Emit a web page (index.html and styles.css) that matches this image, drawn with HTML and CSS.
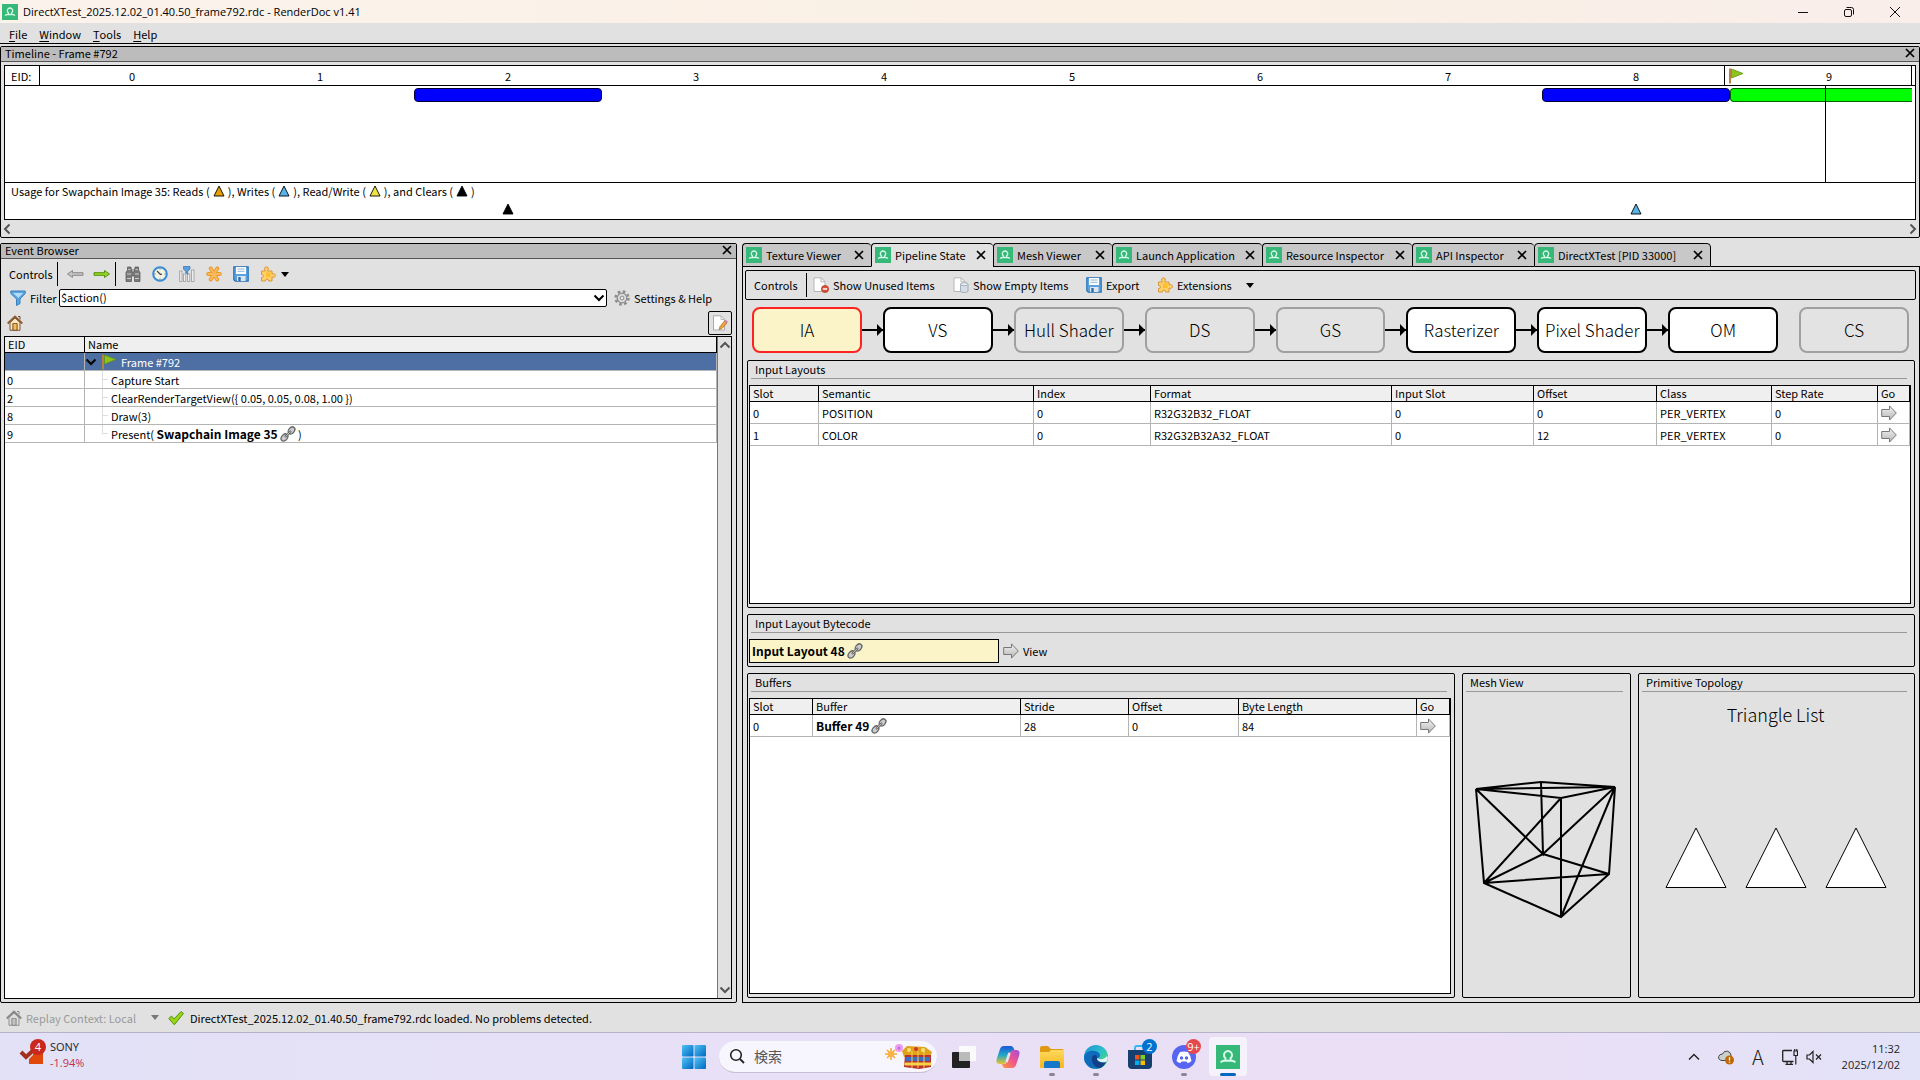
FILE: index.html
```html
<!DOCTYPE html>
<html lang="en">
<head>
<meta charset="utf-8">
<title>DirectXTest_2025.12.02_01.40.50_frame792.rdc - RenderDoc v1.41</title>
<link rel="stylesheet" href="styles.css">
</head>
<body>
<svg class="defs" aria-hidden="true">
  <defs>
    <linearGradient id="g-gray" x1="0" y1="0" x2="0" y2="1"><stop offset="0" stop-color="#f4f4f4"/><stop offset="1" stop-color="#b5b5b5"/></linearGradient>
    <linearGradient id="g-win" x1="0" y1="0" x2="1" y2="1"><stop offset="0" stop-color="#4fc3f7"/><stop offset="1" stop-color="#0067c0"/></linearGradient>
    <linearGradient id="g-edge" x1="0" y1="0" x2="1" y2="1"><stop offset="0" stop-color="#1c8fd8"/><stop offset=".5" stop-color="#2fc1c8"/><stop offset="1" stop-color="#5fd94a"/></linearGradient>
    <linearGradient id="g-cop1" x1="0" y1="0" x2="0" y2="1"><stop offset="0" stop-color="#1a58d8"/><stop offset=".5" stop-color="#22a6c9"/><stop offset="1" stop-color="#e9c62b"/></linearGradient>
    <linearGradient id="g-cop2" x1="1" y1="0" x2="0" y2="1"><stop offset="0" stop-color="#a24be0"/><stop offset=".5" stop-color="#f0568a"/><stop offset="1" stop-color="#ff9a3d"/></linearGradient>
    <linearGradient id="g-fold" x1="0" y1="0" x2="0" y2="1"><stop offset="0" stop-color="#ffd95e"/><stop offset="1" stop-color="#f8b61c"/></linearGradient>
  </defs>
  <symbol id="rd" viewBox="0 0 16 16"><rect width="16" height="16" fill="#35b878"/><path d="M3 11.500C4.500 10.300 5.500 10.300 6.300 10.300V8.800A2.700 2.700 0 1 1 9.700 8.800V10.300C10.500 10.300 11.500 10.300 13 11.500M5.500 10.500H10.500" fill="none" stroke="#d8fbea" stroke-width="1.300"/></symbol>
  <symbol id="x" viewBox="0 0 10 10"><path d="M1 1L9 9M9 1L1 9" stroke="#000" stroke-width="1.700"/></symbol>
  <symbol id="flag" viewBox="0 0 16 16"><path d="M2 0.500V15.500" stroke="#b9803f" stroke-width="2"/><path d="M3.500 1L15 5.500L3.500 10Z" fill="#8fc31c" stroke="#5e9417" stroke-width=".8"/></symbol>
  <symbol id="tri" viewBox="0 0 12 12"><path d="M6 1L11 11H1Z" fill="currentColor" stroke="#000" stroke-width=".9"/></symbol>
  <symbol id="down" viewBox="0 0 8 5"><path d="M0 0H8L4 5Z" fill="currentColor"/></symbol>
  <symbol id="chev" viewBox="0 0 12 8"><path d="M1.500 1.500L6 6L10.500 1.500" fill="none" stroke="currentColor" stroke-width="2"/></symbol>
  <symbol id="thin-arrow" viewBox="0 0 18 12"><path d="M1 4.700H11.500V2.500L16.500 6L11.500 9.500V7.300H1Z" fill="var(--f)" stroke="var(--s)"/></symbol>
  <symbol id="go" viewBox="0 0 16 16"><path d="M.700 4.500H8.500V.900L15.300 8L8.500 15.100V11.500H.700Z" fill="url(#g-gray)" stroke="#777"/></symbol>
  <symbol id="bino" viewBox="0 0 16 16"><path d="M2.500 1H6V3H7V6H9V3H10V1H13.500V4L15 6.500V15.500H9.500V10H6.500V15.500H1V6.500L2.500 4Z" fill="#7a7a7a" stroke="#555" stroke-width=".7"/><path d="M2 8H6M10 8H14M2 12.500H6M10 12.500H14M3.300 3.500H5.500M10.500 3.500H12.700" stroke="#ccc"/></symbol>
  <symbol id="clock" viewBox="0 0 16 16"><circle cx="8" cy="8" r="6.800" fill="#f3f3e4" stroke="#3a8ad4" stroke-width="2"/><path d="M8 2.500V3.500M8 12.500V13.500M2.500 8H3.500M12.500 8H13.500" stroke="#456"/><path d="M5 5L8.500 8.500L10 8" fill="none" stroke="#444" stroke-width="1.200"/></symbol>
  <symbol id="bars" viewBox="0 0 16 16"><g fill="#eee" stroke="#999" stroke-width=".8"><rect x=".7" y="5" width="2.300" height="10.500"/><rect x="4.500" y="8" width="2.300" height="7.500"/><rect x="8.500" y="8" width="2.300" height="7.500"/><rect x="12.500" y="4" width="2.500" height="11.500"/></g><path d="M4.500 .5H11V3L8.700 5.500V8L6.800 7V5.500L4.500 3Z" fill="#5b9fda" stroke="#2f6fb0" stroke-width=".7"/></symbol>
  <symbol id="star" viewBox="0 0 16 16"><path d="M8 8L4.800 2.500M8 8L11.200 2.500M8 8L4.800 13.500M8 8L11.200 13.500M8 8H2.200M8 8H13.800" stroke="#ea9a2e" stroke-width="4" stroke-linecap="round"/><path d="M8 8L5 2.800M8 8L11 2.800M8 8L5 13.200M8 8L11 13.200M8 8H2.500M8 8H13.500" stroke="#fcb95b" stroke-width="2.200" stroke-linecap="round"/></symbol>
  <symbol id="disk" viewBox="0 0 16 16"><path d="M.8.800H15.200V15.200H2.300L.8 13.700Z" fill="#5aa3e0" stroke="#2a72b8" stroke-width="1.200"/><rect x="3" y="1" width="10" height="7" fill="#fff"/><path d="M4.500 3H11.500M4.500 5.300H11.500" stroke="#8eb4d6"/><rect x="4" y="10" width="8.500" height="5" fill="#d9e5ef"/><rect x="5.300" y="11" width="2.400" height="4" fill="#2f6ca8"/></symbol>
  <symbol id="puzzle" viewBox="0 0 16 16"><path d="M1.500 5H5.300C3.800 2.500 5 .8 6.500 .8S9.200 2.500 7.700 5H12V8C14 6.900 15.300 8 15.300 9.500S14 12.100 12 11V15H8.500C9 12.500 5 12.500 5.500 15H1.500V11.500C4 12 4 8 1.500 8.500Z" fill="#ffd06a" stroke="#d9963a"/><path d="M6 6.500H10.500V11H6Z" fill="#ffbe2a"/></symbol>
  <symbol id="funnel" viewBox="0 0 16 16"><path d="M.8 1H15.200V3.500L10 9V13.500L6.500 15.500V9L.8 3.500Z" fill="#57a5e2" stroke="#3a80bd"/><path d="M3 3H13L8.500 8Z" fill="#b6dcf7"/></symbol>
  <symbol id="gear" viewBox="0 0 16 16"><circle cx="8" cy="8" r="6.500" fill="none" stroke="#8c8c8c" stroke-width="2.400" stroke-dasharray="2.600 2.500"/><circle cx="8" cy="8" r="4.800" fill="#ddd" stroke="#8c8c8c" stroke-width="1.300"/><circle cx="8" cy="8" r="1.900" fill="#eee" stroke="#888"/></symbol>
  <symbol id="home" viewBox="0 0 16 16"><path d="M3 7.500V15.300H13V7.500L8 3Z" fill="var(--w)" stroke="var(--l)" stroke-width=".9"/><path d="M11 1.500H13V4.500" fill="none" stroke="var(--l)"/><path d="M.7 8.500L8 1.500L15.300 8.500" fill="none" stroke="var(--r)" stroke-width="1.800"/><path d="M5.800 15V8.500H10.200V15Z" fill="var(--d)" stroke="var(--l)" stroke-width=".8"/><path d="M8 9V15" stroke="var(--w)" stroke-width=".7"/></symbol>
  <symbol id="edit" viewBox="0 0 16 16"><path d="M1.500.8H9L12.500 4.300V15H1.500Z" fill="#fff" stroke="#aaa"/><path d="M9 1V4.500H12.500" fill="none" stroke="#bbb"/><path d="M7 14.500L8 11.500L12.500 6L15 8L10 13.500Z" fill="#f0a237" stroke="#a66c2a" stroke-width=".7"/><path d="M12.500 6L13.500 4.800L16 6.800L15 8Z" fill="#d87bb5"/></symbol>
  <symbol id="link" viewBox="0 0 16 16"><g fill="#ccc" stroke="#666" stroke-width="1.300"><ellipse cx="11.500" cy="4.500" rx="4" ry="2.800" transform="rotate(-50 11.500 4.500)"/><ellipse cx="4.500" cy="11.500" rx="4" ry="2.800" transform="rotate(-50 4.500 11.500)"/></g><path d="M5 11L11 5" stroke="#666" stroke-width="2"/><path d="M5.500 10.500L10.500 5.500" stroke="#ddd" stroke-width=".7"/></symbol>
  <symbol id="unused" viewBox="0 0 16 16"><path d="M1 .8H8L12 4.500V14.500H1Z" fill="#fff" stroke="#b5b5b5"/><path d="M8 1V4.800H12" fill="none" stroke="#b5b5b5"/><circle cx="12" cy="12" r="3.600" fill="#dc5137" stroke="#a83322" stroke-width=".7"/><path d="M9.800 12H14.200" stroke="#fff" stroke-width="1.500"/></symbol>
  <symbol id="empty" viewBox="0 0 16 16"><path d="M1 .8H8L12 4.500V14.500H1Z" fill="#fff" stroke="#b5b5b5"/><path d="M8 1V4.800H12" fill="none" stroke="#b5b5b5"/><path d="M7.500 7V14C7.500 16 15 16 15 14V7Z" fill="#d5dde5" stroke="#8f9dab" stroke-width=".8"/><ellipse cx="11.250" cy="7.200" rx="3.700" ry="1.500" fill="#eef2f6" stroke="#8f9dab" stroke-width=".8"/></symbol>
  <symbol id="check" viewBox="0 0 16 16"><path d="M.8 8.500L3.500 6L6 9L13 1.500L15.500 3.500L6.300 14.800Z" fill="#9ad412" stroke="#4f9414"/></symbol>
</svg>

<header class="titlebar">
  <svg class="i16"><use href="#rd"/></svg>
  <h1>DirectXTest_2025.12.02_01.40.50_frame792.rdc - RenderDoc v1.41</h1>
  <div class="winbtns">
    <button aria-label="Minimize"><svg viewBox="0 0 12 12"><path d="M1 6.500H11" stroke="#111"/></svg></button>
    <button aria-label="Restore"><svg viewBox="0 0 12 12"><rect x="1.500" y="3.500" width="7" height="7" rx="1.500" fill="none" stroke="#111"/><path d="M3.500 1.500H8.500Q10.500 1.500 10.500 3.500V8.500" fill="none" stroke="#111"/></svg></button>
    <button aria-label="Close"><svg viewBox="0 0 12 12"><path d="M1 1L11 11M11 1L1 11" stroke="#111"/></svg></button>
  </div>
</header>

<nav class="menubar">
  <button><u>F</u>ile</button><button><u>W</u>indow</button><button><u>T</u>ools</button><button><u>H</u>elp</button>
</nav>

<section class="dock timeline">
  <div class="dock-title"><h2>Timeline - Frame #792</h2><button aria-label="Close Timeline"><svg class="i10"><use href="#x"/></svg></button></div>
  <div class="tl-frame">
    <div class="tl-head">
      <span class="tl-label">EID:</span>
      <div class="tl-grid tl-nums">
        <span>0</span><span>1</span><span>2</span><span>3</span><span>4</span><span>5</span><span>6</span><span>7</span><span>8</span>
        <span class="tl-current"><svg class="i16"><use href="#flag"/></svg><b>9</b></span>
      </div>
    </div>
    <div class="tl-grid tl-track">
      <i class="bar b2"></i><i class="bar b8"></i><i class="bar b9"></i><i class="cursor"></i>
    </div>
    <div class="tl-usage">
      <p>Usage for Swapchain Image 35: Reads (<svg class="read"><use href="#tri"/></svg>), Writes (<svg class="write"><use href="#tri"/></svg>), Read/Write (<svg class="rw"><use href="#tri"/></svg>), and Clears (<svg><use href="#tri"/></svg>)</p>
      <div class="tl-grid tl-marks"><svg class="m2"><use href="#tri"/></svg><svg class="m8 write"><use href="#tri"/></svg></div>
    </div>
  </div>
  <div class="tl-scroll"><button aria-label="Scroll left"><svg class="chev left"><use href="#chev"/></svg></button><button aria-label="Scroll right"><svg class="chev rightward"><use href="#chev"/></svg></button></div>
</section>

<main class="split">
  <section class="dock events">
    <div class="dock-title"><h2>Event Browser</h2><button aria-label="Close Event Browser"><svg class="i10"><use href="#x"/></svg></button></div>
    <div class="ev-tools">
      <span class="lbl">Controls</span><i class="sep"></i>
      <button aria-label="Back"><svg class="arr dim"><use href="#thin-arrow"/></svg></button>
      <button aria-label="Forward"><svg class="arr on"><use href="#thin-arrow"/></svg></button>
      <i class="sep"></i>
      <button aria-label="Find"><svg class="i16"><use href="#bino"/></svg></button>
      <button aria-label="Time durations"><svg class="i16"><use href="#clock"/></svg></button>
      <button aria-label="Columns"><svg class="i16"><use href="#bars"/></svg></button>
      <button aria-label="Bookmark"><svg class="i16"><use href="#star"/></svg></button>
      <button aria-label="Export"><svg class="i16"><use href="#disk"/></svg></button>
      <button aria-label="Extensions"><svg class="i16"><use href="#puzzle"/></svg></button>
      <svg class="down"><use href="#down"/></svg>
    </div>
    <div class="ev-filter">
      <svg class="i16"><use href="#funnel"/></svg>
      <label for="filter">Filter</label>
      <div class="combo"><input id="filter" type="text" value="$action()"><button aria-label="Filter history"><svg class="chev"><use href="#chev"/></svg></button></div>
      <button class="settings"><svg class="i16"><use href="#gear"/></svg>Settings &amp; Help</button>
    </div>
    <div class="ev-marks">
      <button aria-label="Home"><svg class="i16 home"><use href="#home"/></svg></button>
      <button class="editbtn" aria-label="Edit"><svg class="i16"><use href="#edit"/></svg></button>
    </div>
    <div class="tree">
      <table>
        <colgroup><col class="w-eid"><col></colgroup>
        <thead><tr><th>EID</th><th>Name</th></tr></thead>
        <tbody>
          <tr class="sel"><td></td><td><div class="node"><svg class="chev"><use href="#chev"/></svg><svg class="i16"><use href="#flag"/></svg>Frame #792</div></td></tr>
          <tr><td>0</td><td><div class="leaf"><i></i>Capture Start</div></td></tr>
          <tr><td>2</td><td><div class="leaf"><i></i>ClearRenderTargetView({ 0.05, 0.05, 0.08, 1.00 })</div></td></tr>
          <tr><td>8</td><td><div class="leaf"><i></i>Draw(3)</div></td></tr>
          <tr><td>9</td><td><div class="leaf last"><i></i>Present( <a href="#res35">Swapchain Image 35</a><svg class="i16"><use href="#link"/></svg> )</div></td></tr>
        </tbody>
      </table>
      <div class="vscroll"><svg class="chev up"><use href="#chev"/></svg><svg class="chev"><use href="#chev"/></svg></div>
    </div>
  </section>

  <section class="right">
    <div class="tabs">
      <div class="tab t1"><svg class="i16"><use href="#rd"/></svg><span>Texture Viewer</span><button aria-label="Close tab"><svg class="i10"><use href="#x"/></svg></button></div>
      <div class="tab t2 active"><svg class="i16"><use href="#rd"/></svg><span>Pipeline State</span><button aria-label="Close tab"><svg class="i10"><use href="#x"/></svg></button></div>
      <div class="tab t3"><svg class="i16"><use href="#rd"/></svg><span>Mesh Viewer</span><button aria-label="Close tab"><svg class="i10"><use href="#x"/></svg></button></div>
      <div class="tab t4"><svg class="i16"><use href="#rd"/></svg><span>Launch Application</span><button aria-label="Close tab"><svg class="i10"><use href="#x"/></svg></button></div>
      <div class="tab t4"><svg class="i16"><use href="#rd"/></svg><span>Resource Inspector</span><button aria-label="Close tab"><svg class="i10"><use href="#x"/></svg></button></div>
      <div class="tab t2"><svg class="i16"><use href="#rd"/></svg><span>API Inspector</span><button aria-label="Close tab"><svg class="i10"><use href="#x"/></svg></button></div>
      <div class="tab t5"><svg class="i16"><use href="#rd"/></svg><span>DirectXTest [PID 33000]</span><button aria-label="Close tab"><svg class="i10"><use href="#x"/></svg></button></div>
      <div class="tabfill"></div>
    </div>
    <div class="pane">
      <div class="ps-tools">
        <span class="lbl">Controls</span><i class="sep"></i>
        <button class="p1"><svg class="i16"><use href="#unused"/></svg>Show Unused Items</button>
        <button class="p2"><svg class="i16"><use href="#empty"/></svg>Show Empty Items</button>
        <button class="p3"><svg class="i16"><use href="#disk"/></svg>Export</button>
        <button class="p4"><svg class="i16"><use href="#puzzle"/></svg>Extensions</button>
        <svg class="down"><use href="#down"/></svg>
      </div>
      <div class="stages">
        <button class="stage cur">IA</button><i class="link"></i>
        <button class="stage">VS</button><i class="link"></i>
        <button class="stage off">Hull Shader</button><i class="link"></i>
        <button class="stage off">DS</button><i class="link"></i>
        <button class="stage off">GS</button><i class="link"></i>
        <button class="stage">Rasterizer</button><i class="link"></i>
        <button class="stage">Pixel Shader</button><i class="link"></i>
        <button class="stage">OM</button><i class="gap"></i>
        <button class="stage off">CS</button>
      </div>
      <section class="group layouts">
        <h3>Input Layouts</h3>
        <div class="grid-box">
          <table>
            <colgroup><col class="c-slot"><col class="c-sem"><col class="c-idx"><col class="c-fmt"><col class="c-in"><col class="c-off"><col class="c-cls"><col class="c-step"><col class="c-go"></colgroup>
            <thead><tr><th>Slot</th><th>Semantic</th><th>Index</th><th>Format</th><th>Input Slot</th><th>Offset</th><th>Class</th><th>Step Rate</th><th>Go</th></tr></thead>
            <tbody>
              <tr><td>0</td><td>POSITION</td><td>0</td><td>R32G32B32_FLOAT</td><td>0</td><td>0</td><td>PER_VERTEX</td><td>0</td><td><svg class="i16"><use href="#go"/></svg></td></tr>
              <tr><td>1</td><td>COLOR</td><td>0</td><td>R32G32B32A32_FLOAT</td><td>0</td><td>12</td><td>PER_VERTEX</td><td>0</td><td><svg class="i16"><use href="#go"/></svg></td></tr>
            </tbody>
          </table>
        </div>
      </section>
      <section class="group bytecode">
        <h3>Input Layout Bytecode</h3>
        <div class="bc-row">
          <a class="bc-field" href="#res48">Input Layout 48<svg class="i16"><use href="#link"/></svg></a>
          <button><svg class="i16"><use href="#go"/></svg>View</button>
        </div>
      </section>
      <div class="lower">
        <section class="group buffers">
          <h3>Buffers</h3>
          <div class="grid-box">
            <table>
              <colgroup><col class="d-slot"><col class="d-buf"><col class="d-str"><col class="d-off"><col class="d-len"><col class="d-go"></colgroup>
              <thead><tr><th>Slot</th><th>Buffer</th><th>Stride</th><th>Offset</th><th>Byte Length</th><th>Go</th></tr></thead>
              <tbody><tr><td>0</td><td><div class="res"><a href="#res49">Buffer 49</a><svg class="i16"><use href="#link"/></svg></div></td><td>28</td><td>0</td><td>84</td><td><svg class="i16"><use href="#go"/></svg></td></tr></tbody>
            </table>
          </div>
        </section>
        <section class="group mesh">
          <h3>Mesh View</h3>
          <svg class="cube" viewBox="0 0 143 139"><path d="M2 9L67 2L141 7L87 18ZM2 9L141 7M2 9L10 103L87 137L135 94L141 7M87 18V137M67 2L69 74L2 9M69 74L141 7M69 74L10 103L87 18M10 103L135 94L69 74M87 137L141 7" fill="none" stroke="#000" stroke-width="2"/></svg>
        </section>
        <section class="group topo">
          <h3>Primitive Topology</h3>
          <p>Triangle List</p>
          <svg viewBox="0 0 222 62"><g fill="#fff" stroke="#000"><path d="M31 1L61 60.500H1Z"/><path d="M111 1L141 60.500H81Z"/><path d="M191 1L221 60.500H161Z"/></g></svg>
        </section>
      </div>
    </div>
  </section>
</main>

<footer class="status">
  <svg class="i16 home gray"><use href="#home"/></svg><span class="ctx">Replay Context: Local</span><svg class="down"><use href="#down"/></svg>
  <svg class="i16 ok"><use href="#check"/></svg><span>DirectXTest_2025.12.02_01.40.50_frame792.rdc loaded. No problems detected.</span>
</footer>

<footer class="taskbar">
  <button class="widget">
    <svg viewBox="0 0 28 26"><path d="M3 14L8 19L20 8" fill="none" stroke="#a3301c" stroke-width="4"/><path d="M11 26V21L15 17V14H25V26Z" fill="#e0480c"/><circle cx="20" cy="9" r="8" fill="#c9281c"/><text x="20" y="13" text-anchor="middle" fill="#fff" font-size="11">4</text></svg>
    <span>SONY<em>-1.94%</em></span>
  </button>
  <div class="apps">
    <button aria-label="Start"><svg viewBox="0 0 24 24"><g fill="url(#g-win)"><rect width="11.500" height="11.500" rx="1"/><rect x="12.500" width="11.500" height="11.500" rx="1"/><rect y="12.500" width="11.500" height="11.500" rx="1"/><rect x="12.500" y="12.500" width="11.500" height="11.500" rx="1"/></g></svg></button>
    <div class="search">
      <svg class="mag" viewBox="0 0 16 16"><circle cx="7" cy="7" r="5.300" fill="none" stroke="#222" stroke-width="1.600"/><path d="M11 11L15 15" stroke="#222" stroke-width="1.800"/></svg>
      <input type="text" aria-label="検索" placeholder="検索">
      <svg class="deco" viewBox="0 0 48 26"><g stroke="#f5a93a" stroke-width="1.500"><path d="M6 5V17M0 11H12M2 7L10 15M10 7L2 15"/></g><circle cx="6" cy="11" r="3" fill="#fbb040"/><circle cx="14" cy="5" r="4" fill="#ee9af0"/><circle cx="14" cy="5" r="1.500" fill="#b76ee0"/><path d="M17 8L22 3L40 4L47 9L45 14H19Z" fill="#e0a21a"/><path d="M20 12H46V24L34 26L19 24Z" fill="#b9322c"/><path d="M21 14H45V18H21Z" fill="#3a6fc4"/><path d="M20 20H46V22H20ZM27 8V25M33 8V25M39 8V25" fill="#f6d34a" stroke="#f6d34a"/><circle cx="24" cy="7" r="2" fill="#f6e27a"/><circle cx="31" cy="6" r="2" fill="#d4342a"/><circle cx="38" cy="7" r="2" fill="#f6e27a"/></svg>
    </div>
    <button aria-label="Task view"><svg viewBox="0 0 24 24"><rect x="7" y="1" width="17" height="15" rx="1" fill="#fafafa"/><rect y="7" width="18" height="16" rx="1" fill="#222"/><rect x="7" y="7" width="11" height="9" fill="#bbb"/></svg></button>
    <button aria-label="Copilot"><svg viewBox="0 0 24 24"><path d="M8 1H15Q17 1 18 4L19 7H15Q13 7 12 10L10 17Q9 19 7 19H4Q-1 19 1 13L4 4Q5 1 8 1Z" fill="url(#g-cop1)"/><path d="M16 23H9Q7 23 6 19H9Q11 18 12 14L14 8Q15 5 17 5H20Q25 5 23 11L20 20Q19 23 16 23Z" fill="url(#g-cop2)"/><path d="M13.500 8L10.500 17" stroke="#e8e2f6" stroke-width="2.500"/></svg></button>
    <button class="run" aria-label="Explorer"><svg viewBox="0 0 24 24"><path d="M0 3Q0 1 2 1H8L11 4H22Q24 4 24 6V21H0Z" fill="#e09a12"/><path d="M0 7H9L11 5H24V22Q24 23 23 23H1Q0 23 0 22Z" fill="url(#g-fold)"/><path d="M4 23V18Q4 16 6 16H18Q20 16 20 18V23Z" fill="#1677c8"/></svg></button>
    <button class="run" aria-label="Edge"><svg viewBox="0 0 24 24"><circle cx="12" cy="12" r="12" fill="url(#g-edge)"/><path d="M0 13C0 7 6 5 11 6C17 7 17 12 14 13C13 15 16 18 22 17C18 25 8 26 3 20Q0 17 0 13Z" fill="#0f6cbd"/><path d="M8 12C7 18 11 23 16 23C19 22 21 19 22 17C16 19 12 16 13 13Q13 10 11 10Q9 10 8 12Z" fill="#123f86"/><path d="M13 13C13 16 17 18 22 17C24 15 24 12 23 11C20 15 16 15 13 13Z" fill="#e5f4fb"/></svg></button>
    <button aria-label="Store"><svg viewBox="0 0 24 24"><path d="M7 6V3Q7 1 9 1H15Q17 1 17 3V6" fill="none" stroke="#35b8f0" stroke-width="2"/><path d="M0 5H24V20Q24 24 20 24H4Q0 24 0 20Z" fill="#173f70"/><path d="M7 10H11.500V14.500H7Z" fill="#f1511b"/><path d="M12.500 10H17V14.500H12.500Z" fill="#80cc28"/><path d="M7 15.500H11.500V20H7Z" fill="#00adef"/><path d="M12.500 15.500H17V20H12.500Z" fill="#fbbc09"/></svg><b class="badge blue">2</b></button>
    <button class="run" aria-label="Discord"><svg viewBox="0 0 24 24"><circle cx="12" cy="12" r="12" fill="#5865f2"/><path d="M8 7Q12 6 16 7Q19 11 19.500 16Q17.500 18 15.500 18L14.500 16.500H9.500L8.500 18Q6.500 18 4.500 16Q5 11 8 7Z" fill="#fff"/><circle cx="9.500" cy="13" r="1.700" fill="#5865f2"/><circle cx="14.500" cy="13" r="1.700" fill="#5865f2"/></svg><b class="badge red">9+</b></button>
    <button class="now" aria-label="RenderDoc"><svg><use href="#rd"/></svg></button>
  </div>
  <div class="tray">
    <svg class="t-up" viewBox="0 0 12 8"><path d="M1 6.500L6 1.500L11 6.500" fill="none" stroke="#222" stroke-width="1.400"/></svg>
    <svg class="i16" viewBox="0 0 16 16"><path d="M4 11.500Q0 11 .7 7.500Q1.500 5 4.500 5Q6 1.500 9.500 2.200Q12.500 3 13 6V11.500Z" fill="#ccd0cc" stroke="#444"/><circle cx="11.500" cy="11" r="4.500" fill="#bf6a0a"/><path d="M11.500 8.300V11.500M11.500 12.700V13.700" stroke="#fff" stroke-width="1.300"/></svg>
    <span class="ime">A</span>
    <svg class="i16" viewBox="0 0 16 16"><path d="M10 1.500H1.500Q.7 1.500.7 2.500V11.500Q.7 12.500 1.700 12.500H11.500M5 12.500V15M9 12.500V15M3.500 15.300H11" fill="none" stroke="#222" stroke-width="1.300"/><path d="M12 2V6.500H15.500V2ZM13.800 6.500V15.500M12.700 0V2M14.800 0V2" fill="none" stroke="#222" stroke-width="1.200"/></svg>
    <svg class="i16 spk" viewBox="0 0 16 16"><path d="M1 6H3.500L7 2.500V13.500L3.500 10H1Z" fill="none" stroke="#222" stroke-width="1.200"/><path d="M10 5.500L15 10.500M15 5.500L10 10.500" stroke="#222" stroke-width="1.200"/></svg>
    <time>11:32<br>2025/12/02</time>
  </div>
</footer>
</body>
</html>
```
FILE: styles.css
```css
* { box-sizing: border-box; }
body {
  margin: 0; height: 100vh; display: flex; flex-direction: column; overflow: hidden;
  background: #e1e1e1; color: #000;
  font: 11px/14px "Noto Sans CJK JP", "Liberation Sans", sans-serif;
}
.defs { position: absolute; width: 0; height: 0; }
h1, h2, h3, p { margin: 0; font-size: 11px; font-weight: 400; }
button { border: 0; background: none; padding: 0; margin: 0; font: inherit; color: inherit; display: flex; align-items: center; justify-content: center; }
a { color: inherit; text-decoration: none; font-weight: 700; font-size: 12px; }
svg { display: block; flex: none; }
.i16 { width: 16px; height: 16px; }
.i10 { width: 10px; height: 10px; }
.chev { width: 12px; height: 8px; }
.down { width: 8px; height: 5px; }
.left { transform: rotate(90deg); color: #555; }
.rightward { transform: rotate(-90deg); color: #555; }
.up { transform: rotate(180deg); }
.sep { width: 1px; height: 24px; background: #000; }

.titlebar { flex: none; height: 23px; display: flex; align-items: center; gap: 5px; padding-left: 2px; background: linear-gradient(90deg, #fbf2ec, #faf0e4 60%, #f9eeea); }
.titlebar h1 { flex: 1; font-family: "Open Sans", sans-serif; }
.winbtns { display: flex; padding-right: 2px; }
.winbtns button { width: 46px; height: 20px; }
.winbtns svg { width: 12px; height: 12px; }

.menubar { flex: none; height: 21px; display: flex; gap: 12px; padding: 2px 0 0 9px; border-bottom: 1px solid #000; }
.menubar u { text-underline-offset: 2px; }

.dock { border: 1px solid #000; }
.dock-title { height: 15px; display: flex; justify-content: space-between; align-items: center; padding: 0 4px 2px; background: #bcbcbc; border-bottom: 1px solid #555; }

.timeline { flex: none; margin-top: 2px; border-radius: 2px; }
.tl-frame { margin: 3px 3px 0; border: 1px solid #000; background: #fff; }
.tl-head { display: flex; height: 20px; border-bottom: 1px solid #000; position: relative; }
.tl-label { width: 35px; border-right: 1px solid #000; padding-left: 6px; line-height: 20px; position: absolute; height: 19px; }
.tl-grid { flex: 1; display: grid; grid-template-columns: repeat(9, 188fr) 182fr; margin: 0 3px 0 33px; }
.tl-nums { line-height: 20px; text-align: center; }
.tl-current { display: flex; align-items: center; margin-left: -6px; border: solid #000; border-width: 0 1px; padding-left: 3px; }
.tl-current b { flex: 1; font-weight: 400; padding-left: 3px; }
.tl-track { height: 96px; padding-top: 2px; }
.bar { height: 14px; border: 1px solid #003; border-radius: 4px; background: #00f; grid-row: 1; }
.b2 { grid-column: 3; }
.b8 { grid-column: 9; }
.b9 { grid-column: 10; background: #0f0; border-color: #060; border-right: 0; border-radius: 4px 0 0 4px; }
.cursor { grid-column: 10; grid-row: 1; width: 1px; height: 96px; margin-top: -2px; margin-left: 52%; background: #000; z-index: 1; }
.tl-usage { border-top: 1px solid #000; height: 37px; }
.tl-usage p { padding: 0 6px; display: flex; align-items: center; white-space: pre; height: 16px; }
.tl-usage svg { width: 12px; height: 12px; }
.tl-usage p svg { margin: 0 3px; }
.read { color: #e69f00; }
.write { color: #56b4e9; }
.rw { color: #f0e442; }
.tl-marks { justify-items: center; padding-top: 4px; }
.m2 { grid-column: 3; }
.m8 { grid-column: 9; }
.tl-scroll { display: flex; justify-content: space-between; height: 17px; }

.split { flex: 1; min-height: 0; display: grid; grid-template-columns: 737fr 1178fr; gap: 5px; margin-top: 5px; }
.events { display: flex; flex-direction: column; border-radius: 2px; padding: 0 0 3px; }
.ev-tools { display: flex; align-items: center; height: 30px; padding-left: 8px; }
.ev-tools button { width: 27px; height: 24px; }
.ev-tools .lbl { width: 48px; }
.ev-tools .sep + button { margin-left: 3px; }
.arr { width: 18px; height: 12px; }
.dim { --f: #c4c4c4; --s: #8a8a8a; transform: scaleX(-1); }
.on { --f: #9bd41c; --s: #4f9414; }
.ev-filter { display: flex; align-items: center; height: 18px; padding: 0 20px 0 9px; }
.ev-filter label { width: 33px; padding-left: 4px; }
.combo { flex: 1; height: 18px; display: flex; border: 1px solid #000; border-radius: 2px; background: #fff; }
.combo input { flex: 1; border: 0; padding: 0 1px; font: inherit; height: 14px; background: none; outline: 0; }
.combo button { width: 15px; }
.settings { margin-left: 7px; gap: 4px; width: 102px; justify-content: flex-start; white-space: nowrap; }
.ev-marks { display: flex; justify-content: space-between; align-items: center; height: 29px; padding: 3px 4px 0 6px; }
.editbtn { width: 24px; height: 24px; border: 1px solid #000; border-radius: 2px; }
.home { --w: #fbe6c0; --l: #6d4a2a; --r: #8b5a30; --d: #f0a32c; }
.gray { --w: #ddd; --l: #888; --r: #888; --d: #b5b5b5; }
.tree { flex: 1; min-height: 0; margin: 0 4px 0 3px; border: 1px solid #000; background: #fff; display: flex; align-items: stretch; }
.tree table { flex: 1; align-self: flex-start; }
.vscroll { width: 14px; background: #e1e1e1; display: flex; flex-direction: column; justify-content: space-between; align-items: center; padding: 4px 0; border-left: 1px solid #777; color: #555; }

table { width: 100%; table-layout: fixed; border-collapse: separate; border-spacing: 0; }
th { text-align: left; font-weight: 400; height: 16px; padding: 0 3px 1px; background: #efefef; border-bottom: 1px solid #000; border-right: 1px solid #000; }
td { padding: 0 2px; border-bottom: 1px solid #b4b4b4; border-right: 1px solid #b4b4b4; white-space: nowrap; }
.w-eid { width: 80px; }
.tree td { height: 18px; }
.tree td:last-child { padding: 0; }
.sel td { background: #4e6fa3; color: #fff; }
.node { display: flex; align-items: center; height: 17px; }
.node .chev { color: #000; }
.node .i16 { margin: 0 4px 0 4px; }
.leaf { display: flex; align-items: center; height: 17px; white-space: pre; }
.leaf i { align-self: stretch; margin: 0 3px 0 17px; width: 6px; border-left: 1px solid #ddd; background: linear-gradient(#ddd, #ddd) 0 8px / 6px 1px no-repeat; }
.leaf.last i { align-self: flex-start; height: 9px; }
.leaf svg { margin-left: 2px; }
.res { display: flex; align-items: center; gap: 2px; }

.right { display: flex; flex-direction: column; min-width: 0; }
.tabs { display: flex; height: 24px; }
.tab { flex: none; display: flex; align-items: center; gap: 4px; padding: 0 7px 0 3px; background: #c8c8c8; border: 1px solid #000; border-right-width: 0; border-radius: 4px 4px 0 0; white-space: nowrap; }
.tab span { flex: 1; }
.tab.active { background: #e1e1e1; border-bottom-color: #e1e1e1; }
.t1 { width: 129px; } .t2 { width: 122px; } .t3 { width: 119px; } .t4 { width: 150px; } .t5 { width: 177px; border-right-width: 1px; }
.tabfill { flex: 1; border-bottom: 1px solid #000; }
.pane { flex: 1; min-height: 0; display: flex; flex-direction: column; border: solid #000; border-width: 0 1px 1px; padding: 3px 3px 4px; }
.ps-tools { flex: none; height: 30px; display: flex; align-items: center; border: 1px solid #000; border-radius: 2px; padding-left: 8px; margin: 0 0 0 -1px; }
.ps-tools .lbl { width: 52px; }
.ps-tools .sep { margin-right: 6px; }
.ps-tools button { gap: 4px; justify-content: flex-start; white-space: nowrap; }
.p1 { width: 140px; } .p2 { width: 133px; } .p3 { width: 71px; } .p4 { width: 89px; }
.stages { flex: none; display: flex; align-items: center; padding: 7px 7px 7px 6px; }
.stage { flex: 1 1 0; min-width: 0; height: 46px; border: 2px solid #000; border-radius: 8px; background: #fff; font-size: 17px; line-height: 20px; white-space: nowrap; font-weight: 300; }
.stage.off { background: #e3e3e3; border-color: #a0a0a0; }
.stage.cur { background: #faf4c8; border-color: #f22; }
.link { width: 21px; height: 12px; background: linear-gradient(#000, #000) 0 5px / 100% 2px no-repeat; display: flex; justify-content: flex-end; }
.link::after { content: ""; border: solid transparent; border-width: 6px 0 6px 6px; border-left-color: #000; }
.gap { width: 21px; }
.group { border: 1px solid #000; border-radius: 2px; padding: 0 3px 3px 1px; display: flex; flex-direction: column; margin: 0 1px; }
.group h3 { height: 18px; line-height: 17px; margin: 0 4px 6px 2px; padding-left: 4px; border-bottom: 1px solid #999; }
.grid-box { flex: 1; min-height: 0; border: 1px solid #000; background: #fff; }
.grid-box td { height: 22px; padding: 0 3px; }
td .i16 { display: inline-block; vertical-align: middle; }
.layouts { flex: 243 1 0; }
.c-slot { width: 69px; } .c-sem { width: 215px; } .c-idx { width: 117px; } .c-fmt { width: 241px; } .c-in { width: 142px; } .c-off { width: 123px; } .c-cls { width: 115px; } .c-step { width: 106px; } .c-go { width: 32px; }
.d-slot { width: 63px; } .d-buf { width: 208px; } .d-str { width: 108px; } .d-off { width: 110px; } .d-len { width: 178px; } .d-go { width: 33px; }
.bytecode { flex: none; margin-top: 6px; margin-bottom: 6px; }
.bc-row { display: flex; gap: 4px; }
.bc-field { width: 250px; height: 24px; display: flex; align-items: center; gap: 2px; padding-left: 2px; border: 1px solid #000; background: #faf4c8; }
.bc-row button { gap: 4px; }
.lower { flex: 325 1 0; min-height: 0; display: grid; grid-template-columns: 710fr 171fr 279fr; gap: 5px; }
.cube { width: 143px; height: 139px; margin: 82px auto 0; }
.topo p { text-align: center; font-size: 18px; line-height: 24px; font-weight: 300; margin-top: 4px; }
.topo svg { width: 222px; height: 62px; margin: 101px auto 0; }

.status { flex: none; height: 29px; display: flex; align-items: center; padding-left: 6px; }
.status .ctx { width: 129px; padding-left: 4px; color: #999; }
.status .down { color: #777; }
.status .ok { margin: 0 6px 0 9px; }

.taskbar { flex: none; height: 48px; border-top: 1px solid #b5b1c8; display: grid; grid-template-columns: 1fr auto 1fr; align-items: center; background: linear-gradient(90deg, #e2e1f6, #e8e0f6 45%, #ebdff5 75%, #e2e2f8); font-family: "Open Sans", "Noto Sans CJK JP", sans-serif; font-size: 11px; line-height: 16px; color: #222; }
.widget { justify-self: start; padding-left: 18px; gap: 4px; text-align: left; align-self: start; padding-top: 6px; align-items: flex-start; }
.widget svg { width: 28px; height: 26px; margin-top: -1px; }
.widget em { display: block; font-style: normal; color: #c4314b; }
.apps { display: flex; align-items: center; margin-left: 2px; }
.apps > button { width: 44px; height: 47px; position: relative; }
.apps > button svg { width: 24px; height: 24px; }
.search { width: 218px; height: 32px; margin: 0 5px 0 3px; border-radius: 16px; background: #f7f5fd; border-bottom: 1px solid #c4bfd4; display: flex; align-items: center; padding: 0 4px 0 10px; }
.mag { width: 16px; height: 16px; }
.search input { flex: 1; min-width: 0; border: 0; background: none; font: 14px/20px "Noto Sans CJK JP", sans-serif; padding: 0 0 0 9px; }
.search input::placeholder { color: #555; opacity: 1; }
.deco { width: 48px; height: 26px; }
.run::after, .now::after { content: ""; position: absolute; bottom: 4px; left: 19px; width: 6px; height: 3px; border-radius: 2px; background: #8a8794; }
.now::before { content: ""; position: absolute; inset: 4px 3px; border-radius: 4px; background: #f6f2fc; }
.now svg { position: relative; }
.now::after { left: 14px; width: 16px; background: #0067c0; }
.badge { position: absolute; top: 6px; left: 24px; min-width: 15px; height: 15px; border-radius: 8px; color: #fff; font-weight: 400; line-height: 15px; text-align: center; }
.blue { background: #0072d0; }
.red { background: #e5484d; }
.tray { justify-self: end; display: flex; align-items: center; padding-right: 20px; }
.t-up { width: 12px; height: 8px; margin-right: 18px; }
.ime { font: 300 20px/24px "Noto Sans CJK JP", sans-serif; width: 14px; text-align: center; margin: 0 17px; }
.spk { margin: 0 17px 0 8px; }
.tray time { text-align: right; width: 61px; }
```
